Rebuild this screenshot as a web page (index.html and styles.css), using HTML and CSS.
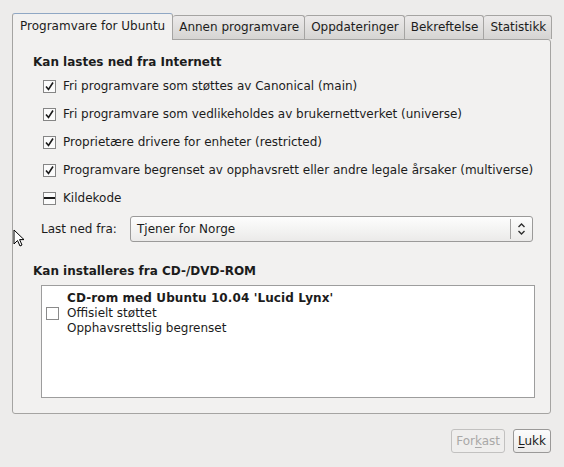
FILE: index.html
```html
<!DOCTYPE html>
<html>
<head>
<meta charset="utf-8">
<link rel="stylesheet" href="styles.css">
</head>
<body>
<div class="window">
  <div class="notebook">
    <div class="tabs">
      <div class="tab active">Programvare for Ubuntu</div>
      <div class="tab">Annen programvare</div>
      <div class="tab">Oppdateringer</div>
      <div class="tab">Bekreftelse</div>
      <div class="tab">Statistikk</div>
    </div>
    <div class="page">
      <div class="heading">Kan lastes ned fra Internett</div>
      <div class="checks">
        <div class="row"><span class="cb checked"><svg viewBox="0 0 13 13" width="13" height="13"><path d="M3 6.5 L5.5 9.5 L10 2.5" fill="none" stroke="#1a1a1a" stroke-width="1.6"/></svg></span><span>Fri programvare som støttes av Canonical (main)</span></div>
        <div class="row"><span class="cb checked"><svg viewBox="0 0 13 13" width="13" height="13"><path d="M3 6.5 L5.5 9.5 L10 2.5" fill="none" stroke="#1a1a1a" stroke-width="1.6"/></svg></span><span>Fri programvare som vedlikeholdes av brukernettverket (universe)</span></div>
        <div class="row"><span class="cb checked"><svg viewBox="0 0 13 13" width="13" height="13"><path d="M3 6.5 L5.5 9.5 L10 2.5" fill="none" stroke="#1a1a1a" stroke-width="1.6"/></svg></span><span>Proprietære drivere for enheter (restricted)</span></div>
        <div class="row"><span class="cb checked"><svg viewBox="0 0 13 13" width="13" height="13"><path d="M3 6.5 L5.5 9.5 L10 2.5" fill="none" stroke="#1a1a1a" stroke-width="1.6"/></svg></span><span>Programvare begrenset av opphavsrett eller andre legale årsaker (multiverse)</span></div>
        <div class="row"><span class="cb mixed"><span class="bar"></span></span><span>Kildekode</span></div>
      </div>
      <div class="source">
        <span class="label">Last ned fra:</span>
        <div class="combo">
          <span class="combo-text">Tjener for Norge</span>
          <span class="combo-sep"></span>
          <svg class="combo-arrows" viewBox="0 0 9 14" width="9" height="14"><path d="M1.5 5 L4.5 2 L7.5 5 M1.5 9 L4.5 12 L7.5 9" fill="none" stroke="#2e2e2e" stroke-width="1.4"/></svg>
        </div>
      </div>
      <div class="heading second">Kan installeres fra CD-/DVD-ROM</div>
      <div class="listbox">
        <div class="item">
          <span class="cb plain"></span>
          <div class="item-text">
            <div class="bold">CD-rom med Ubuntu 10.04 'Lucid Lynx'</div>
            <div>Offisielt støttet</div>
            <div>Opphavsrettslig begrenset</div>
          </div>
        </div>
      </div>
    </div>
  </div>
  <div class="buttons">
    <div class="btn disabled">For<u>k</u>ast</div>
    <div class="btn"><u>L</u>ukk</div>
  </div>
</div>
<svg class="cursor" viewBox="0 0 12 19" width="12" height="19"><path d="M1 1 L1 15 L4.5 11.5 L7 17 L9 16 L6.6 10.6 L11 10.6 Z" fill="#fff" stroke="#000" stroke-width="1"/></svg>
</body>
</html>
```
FILE: styles.css
```css
html, body {
  margin: 0;
  padding: 0;
}
body {
  width: 564px;
  height: 467px;
  background: #edeceb;
  font-family: "DejaVu Sans", sans-serif;
  font-size: 12px;
  color: #1c1c1c;
  position: relative;
  overflow: hidden;
}
.window {
  padding: 13px 13px 0 12px;
}
.notebook {
  width: 539px;
}
.tabs {
  display: flex;
  align-items: flex-end;
  height: 26px;
}
.tab {
  height: 24px;
  box-sizing: border-box;
  padding: 0 5px 0 6px;
  line-height: 23px;
  border: 1px solid #a5a4a2;
  border-bottom: none;
  border-left: none;
  border-radius: 3px 3px 0 0;
  background: linear-gradient(#eceaea, #d5d4d2);
  color: #1c1c1c;
  white-space: nowrap;
}
.tab.active {
  height: 27px;
  margin-bottom: -1px;
  padding: 0 7px 0 7px;
  border-left: 1px solid #a5a4a2;
  border-top: 1px solid #8fa7c4;
  background: #f2f1f0;
  line-height: 25px;
  position: relative;
  z-index: 1;
}
.page {
  height: 375px;
  box-sizing: border-box;
  border: 1px solid #a5a4a2;
  border-radius: 0 3px 3px 3px;
  background: #f2f1f0;
  padding: 14px 16px 0 20px;
}
.heading {
  font-weight: bold;
  line-height: 16px;
}
.checks {
  padding-left: 10px;
  padding-top: 2px;
}
.row {
  display: flex;
  align-items: center;
  height: 28px;
  gap: 7px;
  white-space: nowrap;
}
.cb {
  width: 13px;
  height: 13px;
  box-sizing: border-box;
  border: 1px solid #858585;
  background: #fbfbfb;
  display: inline-flex;
  align-items: center;
  justify-content: center;
  flex: none;
}
.cb svg {
  display: block;
  margin: -1px;
}
.cb.mixed .bar {
  width: 11px;
  height: 2px;
  background: #1a1a1a;
}
.source {
  display: flex;
  align-items: center;
  padding-left: 8px;
  margin-top: 4px;
  height: 26px;
}
.label {
  width: 89px;
}
.combo {
  width: 403px;
  height: 26px;
  box-sizing: border-box;
  border: 1px solid #9b9a99;
  border-radius: 3px;
  background: linear-gradient(#fdfdfd, #f4f4f3 50%, #ebeae9);
  display: flex;
  align-items: center;
  padding-left: 6px;
}
.combo-text {
  flex: 1;
}
.combo-sep {
  width: 1px;
  height: 20px;
  background: #a3a2a1;
  margin-right: 6px;
}
.combo-arrows {
  margin-right: 6px;
}
.heading.second {
  margin-top: 21px;
}
.listbox {
  margin: 6px 0 0 8px;
  width: 494px;
  height: 113px;
  box-sizing: border-box;
  border: 1px solid #9d9d9d;
  background: #ffffff;
}
.item {
  display: flex;
  align-items: center;
  padding: 4px 0 0 4px;
  gap: 8px;
}
.item-text {
  line-height: 15px;
}
.bold {
  font-weight: bold;
  letter-spacing: 0.1px;
  line-height: 16px;
}
.cb.plain {
  border-color: #8a8a8a;
  background: #ffffff;
}
.buttons {
  display: flex;
  justify-content: flex-end;
  gap: 8px;
  margin-top: 15px;
  width: 539px;
}
.btn {
  height: 24px;
  box-sizing: border-box;
  border: 1px solid #9a9998;
  border-radius: 3px;
  background: linear-gradient(#fcfcfc, #ebeae9);
  line-height: 22px;
  padding: 0 4px;
  color: #1c1c1c;
}
.btn.disabled {
  color: #a9a8a7;
  border-color: #c2c1c0;
  background: #efeeed;
}
.btn u {
  text-decoration-thickness: 1px;
  text-underline-offset: 2px;
}
.cursor {
  position: absolute;
  left: 13px;
  top: 229px;
}
```
